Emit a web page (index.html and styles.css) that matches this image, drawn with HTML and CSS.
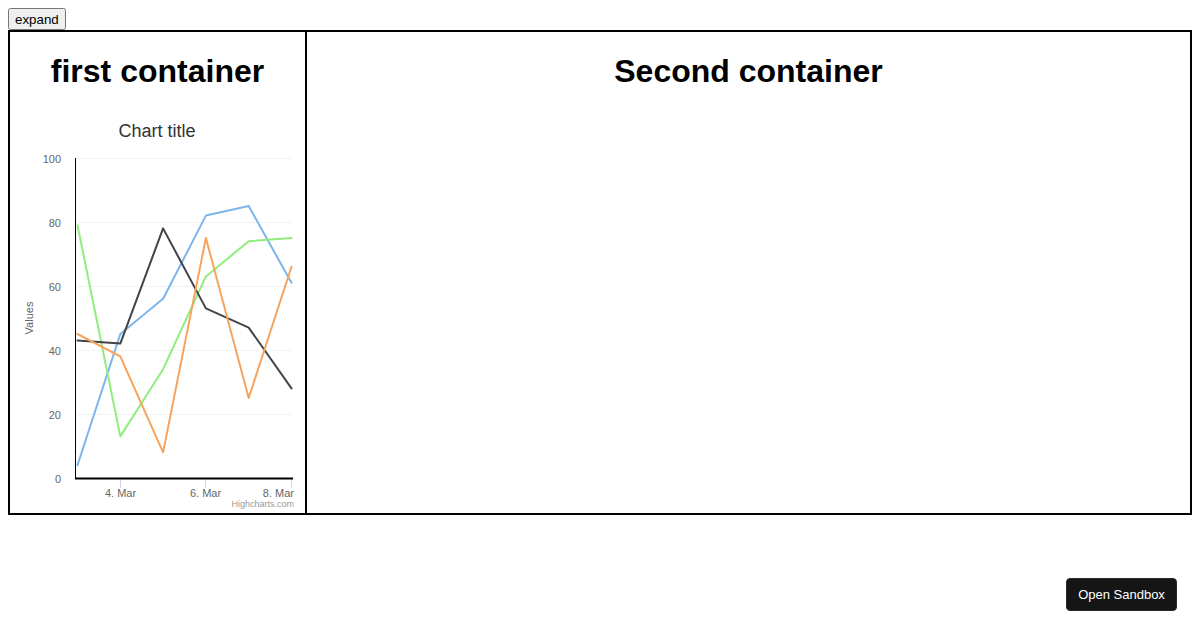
FILE: index.html
```html
<!DOCTYPE html>
<html>
<head>
<meta charset="utf-8">
<link rel="stylesheet" href="styles.css">
</head>
<body>
<button class="expand">expand</button>
<div class="wrap">
  <div class="first">
    <h1 class="title">first container</h1>
    <svg class="chart" width="295" height="400" viewBox="0 0 295 400" xmlns="http://www.w3.org/2000/svg">
      <text x="147" y="25" text-anchor="middle" class="ctitle">Chart title</text>
      <g class="grid">
        <line x1="65" y1="46.5" x2="283" y2="46.5"/>
        <line x1="65" y1="110.5" x2="283" y2="110.5"/>
        <line x1="65" y1="174.5" x2="283" y2="174.5"/>
        <line x1="65" y1="238.5" x2="283" y2="238.5"/>
        <line x1="65" y1="302.5" x2="283" y2="302.5"/>
      </g>
      <g class="ticks">
        <line x1="110.5" y1="366" x2="110.5" y2="376"/>
        <line x1="195.5" y1="366" x2="195.5" y2="376"/>
        <line x1="281.5" y1="366" x2="281.5" y2="376"/>
      </g>
      <line x1="65.5" y1="46" x2="65.5" y2="366" class="yaxis"/>
      <line x1="65" y1="366.5" x2="283" y2="366.5" class="xaxis"/>
      <g class="ylab">
        <text x="51" y="51">100</text>
        <text x="51" y="115">80</text>
        <text x="51" y="179">60</text>
        <text x="51" y="243">40</text>
        <text x="51" y="307">20</text>
        <text x="51" y="371">0</text>
      </g>
      <text class="ytitle" x="0" y="0" transform="translate(23 206) rotate(-90)" text-anchor="middle">Values</text>
      <g class="xlab">
        <text x="110.5" y="385">4. Mar</text>
        <text x="195.5" y="385">6. Mar</text>
        <text x="284" y="385" class="end">8. Mar</text>
      </g>
      <polyline class="s s1" points="67.5,353.2 110.3,222 153.1,186.8 195.9,103.6 238.7,94 281.5,170.8"/>
      <polyline class="s s2" points="67.5,113.2 110.3,324.4 153.1,257.2 195.9,164.4 238.7,129.2 281.5,126"/>
      <polyline class="s s3" points="67.5,228.4 110.3,231.6 153.1,116.4 195.9,196.4 238.7,215.6 281.5,276.4"/>
      <polyline class="s s4" points="67.5,222 110.3,244.4 153.1,340.4 195.9,126 238.7,286 281.5,154.8"/>
      <text class="credit" x="284" y="395" text-anchor="end">Highcharts.com</text>
    </svg>
  </div>
  <div class="second">
    <h1 class="title">Second container</h1>
  </div>
</div>
<button class="sandbox">Open Sandbox</button>
</body>
</html>
```
FILE: styles.css
```css
body {
  margin: 8px;
  font-family: "Liberation Sans", Arial, sans-serif;
  background: #fff;
}
.expand {
  display: block;
  height: 22px;
  font-family: "Liberation Sans", Arial, sans-serif;
  font-size: 13.33px;
  padding: 1px 5px;
  color: #000;
  margin-bottom: 0;
}
.wrap {
  display: flex;
  border: 2px solid #000;
}
.first {
  width: 295px;
  flex: none;
  border-right: 2px solid #000;
}
.second {
  flex: 1;
}
.title {
  font-size: 32px;
  font-weight: bold;
  text-align: center;
  margin: 21.44px 0;
  line-height: 37px;
}
.chart {
  display: block;
  margin-bottom: 1px;
}
.chart text {
  font-family: "Liberation Sans", Arial, sans-serif;
}
.ctitle {
  font-size: 18px;
  fill: #333333;
}
.grid line {
  stroke: #f3f3f3;
  stroke-width: 1;
}
.ticks line {
  stroke: #ccd6eb;
  stroke-width: 1;
}
.yaxis {
  stroke: #000;
  stroke-width: 1;
}
.xaxis {
  stroke: #000;
  stroke-width: 2;
}
.ylab text {
  font-size: 11px;
  fill: #666666;
  text-anchor: end;
}
.ytitle {
  font-size: 11px;
  fill: #666666;
}
.xlab text {
  font-size: 11px;
  fill: #666666;
  text-anchor: middle;
}
.xlab text.end {
  text-anchor: end;
}
.s {
  fill: none;
  stroke-width: 2;
  stroke-linejoin: round;
  stroke-linecap: round;
}
.s1 { stroke: #7cb5ec; }
.s2 { stroke: #90ed7d; }
.s3 { stroke: #434348; }
.s4 { stroke: #f7a35c; }
.credit {
  font-size: 9px;
  fill: #999999;
}
.sandbox {
  position: fixed;
  right: 23px;
  bottom: 19px;
  width: 111px;
  height: 33px;
  background: #151515;
  color: #fff;
  border: 1px solid #2a2a2a;
  border-radius: 4px;
  font-family: "Liberation Sans", Arial, sans-serif;
  font-size: 13px;
  padding: 0;
}
```
